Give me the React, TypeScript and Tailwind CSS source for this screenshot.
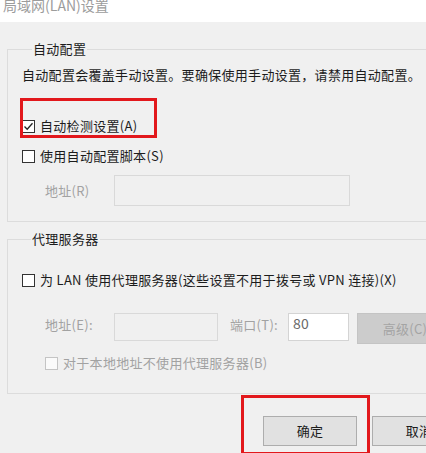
const FONT = "font-['Noto_Sans_CJK_SC','Noto_Sans',sans-serif]";

function Box({ checked, disabled }: { checked?: boolean; disabled?: boolean }) {
  return (
    <span
      className={
        "inline-flex h-[13px] w-[13px] shrink-0 items-center justify-center border " +
        (disabled ? "border-[#c4c4c4] bg-[#fafafa]" : "border-[#333333] bg-white")
      }
    >
      {checked && (
        <svg width="11" height="11" viewBox="0 0 11 11">
          <path d="M1.5 5.5 L4.2 8.3 L9.5 2.2" fill="none" stroke="#222" strokeWidth="1.3" />
        </svg>
      )}
    </span>
  );
}

function CheckRow({
  label,
  checked,
  disabled,
}: {
  label: string;
  checked?: boolean;
  disabled?: boolean;
}) {
  return (
    <div className="flex h-[16px] items-center gap-[5px]">
      <Box checked={checked} disabled={disabled} />
      <span className={"whitespace-nowrap leading-[16px] " + (disabled ? "text-[#a2a2a2]" : "text-[#1c1c1c]")}>
        {label}
      </span>
    </div>
  );
}

export default function App() {
  return (
    <div className={"flex h-[453px] w-[426px] flex-col overflow-hidden bg-[#f0f0f0] text-[13px] tracking-[0.3px] " + FONT}>
      <div className="h-[22px] shrink-0 bg-white pl-[3px]">
        <div className="mt-[-2px] text-[14px] leading-[14px] tracking-normal text-[#9c9c9c]">局域网(LAN)设置</div>
      </div>

      <div className="pl-[7px]">
        {/* 自动配置 */}
        <fieldset className="mt-[20px] w-[460px] border border-[#dcdcdc] pb-[15px] pl-[14px] pt-[11px]">
          <legend className="ml-[10px] px-[1px] leading-[14px] text-[#1c1c1c]">自动配置</legend>
          <div className="h-[16px] whitespace-nowrap leading-[16px] text-[#1c1c1c]">
            自动配置会覆盖手动设置。要确保使用手动设置，请禁用自动配置。
          </div>
          <div className="relative mt-[35px]">
            <CheckRow label="自动检测设置(A)" checked />
            <div className="absolute left-[-2px] top-[-20px] h-[40px] w-[137px] border-[3px] border-[#e2181c]" />
          </div>
          <div className="mt-[14px]">
            <CheckRow label="使用自动配置脚本(S)" />
          </div>
          <div className="mt-[11px] flex items-center">
            <span className="w-[92px] pl-[23px] text-[#a2a2a2]">地址(R)</span>
            <div className="h-[31px] w-[236px] border border-[#d9d9d9] bg-[#f0f0f0]" />
          </div>
        </fieldset>

        {/* 代理服务器 */}
        <fieldset className="mt-[10px] w-[460px] border border-[#dcdcdc] pb-[22px] pl-[14px]">
          <legend className="ml-[9px] px-[1px] leading-[14px] text-[#1c1c1c]">代理服务器</legend>
          <div className="mt-[26px]">
            <CheckRow label="为 LAN 使用代理服务器(这些设置不用于拨号或 VPN 连接)(X)" />
          </div>
          <div className="mt-[25px] flex items-start">
            <span className="w-[92px] pl-[23px] leading-[24px] text-[#a2a2a2]">地址(E):</span>
            <div className="h-[28px] w-[104px] border border-[#d9d9d9] bg-[#f0f0f0]" />
            <span className="ml-[12px] w-[58px] leading-[24px] text-[#a2a2a2]">端口(T):</span>
            <div className="h-[28px] w-[61px] border border-[#d4d4d4] bg-white pl-[4px] text-[14px] leading-[18px] text-[#6a6a6a]">
              80
            </div>
            <div className="ml-[8px] flex h-[31px] w-[96px] items-center justify-center border border-[#c4c4c4] bg-[#cccccc] text-[#a4a4a4]">
              高级(C)
            </div>
          </div>
          <div className="mt-[11px] pl-[23px]">
            <CheckRow label="对于本地地址不使用代理服务器(B)" disabled />
          </div>
        </fieldset>
      </div>

      <div className="mt-[22px] flex gap-[15px] pl-[263px]">
        <div className="relative">
          <div className="flex h-[30px] w-[94px] items-center justify-center border border-[#adadad] bg-[#e1e1e1] text-[#1c1c1c]">
            确定
          </div>
          <div className="absolute left-[-22px] top-[-21px] h-[60px] w-[129px] border-[3px] border-[#e2181c]" />
        </div>
        <div className="flex h-[30px] w-[94px] shrink-0 items-center justify-center border border-[#adadad] bg-[#e1e1e1] text-[#1c1c1c]">
          取消
        </div>
      </div>
    </div>
  );
}
